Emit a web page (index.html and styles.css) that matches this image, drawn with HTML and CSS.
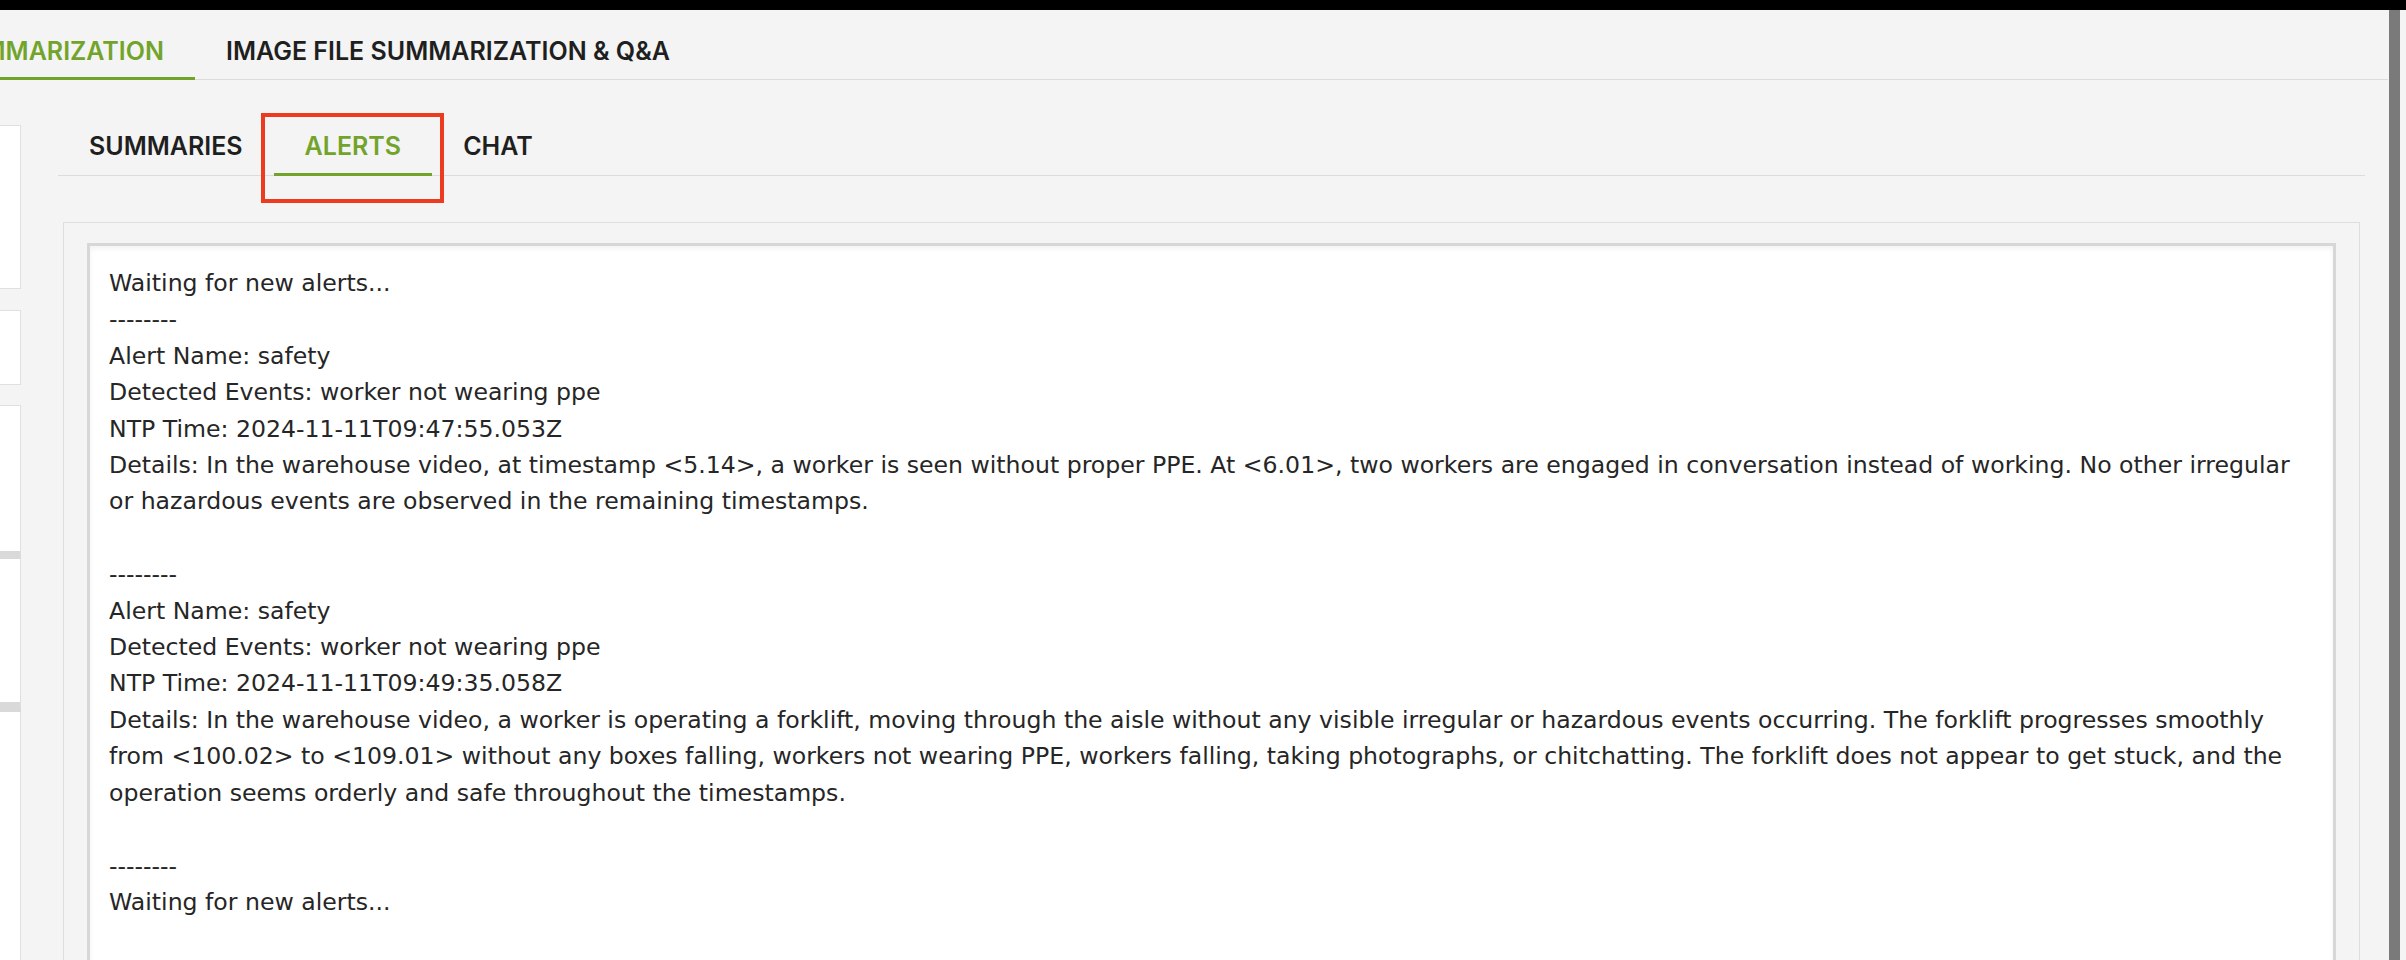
FILE: index.html
```html
<!DOCTYPE html>
<html lang="en">
<head>
    <meta charset="UTF-8">
    <meta name="viewport" content="width=device-width, initial-scale=1.0">
    <title>Video Search and Summarization - Alerts</title>
    <link rel="stylesheet" href="styles.css">
</head>
<body>
    <div class="window-bar"></div>

    <div class="app">
        <div class="page">
            <nav class="tabs top-tabs">
                <button class="tab tab-clipped active">VIDEO FILE SUMMARIZATION</button>
                <button class="tab">IMAGE FILE SUMMARIZATION &amp; Q&amp;A</button>
            </nav>

            <div class="workspace">
                <aside class="side">
                    <div class="side-block block-a"></div>
                    <div class="side-block block-b"></div>
                    <div class="side-block block-c"></div>
                    <div class="side-block block-d"></div>
                    <div class="side-block block-e"></div>
                </aside>

                <main class="results">
                    <nav class="tabs sub-tabs">
                        <button class="tab">SUMMARIES</button>
                        <button class="tab active">ALERTS<span class="callout"></span></button>
                        <button class="tab">CHAT</button>
                    </nav>

                    <div class="panel">
                        <div class="alerts-box">Waiting for new alerts...
--------
Alert Name: safety
Detected Events: worker not wearing ppe
NTP Time: 2024-11-11T09:47:55.053Z
Details: In the warehouse video, at timestamp &lt;5.14&gt;, a worker is seen without proper PPE. At &lt;6.01&gt;, two workers are engaged in conversation instead of working. No other irregular or hazardous events are observed in the remaining timestamps.

--------
Alert Name: safety
Detected Events: worker not wearing ppe
NTP Time: 2024-11-11T09:49:35.058Z
Details: In the warehouse video, a worker is operating a forklift, moving through the aisle without any visible irregular or hazardous events occurring. The forklift progresses smoothly from &lt;100.02&gt; to &lt;109.01&gt; without any boxes falling, workers not wearing PPE, workers falling, taking photographs, or chitchatting. The forklift does not appear to get stuck, and the operation seems orderly and safe throughout the timestamps.

--------
Waiting for new alerts...</div>
                    </div>
                </main>
            </div>
        </div>

        <div class="scrollbar"><div class="scrollbar-thumb"></div></div>
    </div>
</body>
</html>
```

FILE: styles.css
```css
* {
    margin: 0;
    padding: 0;
    box-sizing: border-box;
}

body {
    font-family: "DejaVu Sans", Verdana, sans-serif;
    background: #f4f4f4;
    color: #262626;
    height: 100vh;
    overflow: hidden;
}

.window-bar {
    height: 10px;
    background: #000;
}

.app {
    display: flex;
    height: 950px;
}

.page {
    flex: 1;
    min-width: 0;
}

/* tab bars */
.tabs {
    display: flex;
    border-bottom: 1px solid #dcdcdc;
}

.tab {
    position: relative;
    display: flex;
    font-family: Inter, "Liberation Sans", sans-serif;
    font-size: 25px;
    font-weight: 600;
    line-height: 30px;
    color: #1f1f1f;
    white-space: nowrap;
    background: none;
    border: none;
    border-bottom: 3px solid transparent;
    margin-bottom: -1px;
    padding: 26px 31px 11px;
    cursor: pointer;
}

.tab.active {
    color: #72a42c;
    border-bottom-color: #72a42c;
}

.tab-clipped {
    width: 195px;
    justify-content: flex-end;
    overflow: hidden;
}

.sub-tabs .tab {
    padding: 51px 31px 12px;
}

.callout {
    position: absolute;
    top: 33px;
    left: -13px;
    width: 183px;
    height: 90px;
    border: 4px solid #ec3b1e;
}

/* body */
.workspace {
    display: flex;
    align-items: flex-start;
    gap: 37px;
}

.side {
    width: 21px;
    margin-top: 45px;
    display: flex;
    flex-direction: column;
}

.side-block {
    background: #fff;
    border: 1px solid #e0e0e0;
    border-left: none;
}

.block-a { height: 164px; }
.block-b { height: 75px; margin-top: 21px; }
.block-c { height: 154px; margin-top: 20px; border-bottom: 8px solid #d9d9d9; }
.block-d { height: 153px; border-top: none; border-bottom: 10px solid #d9d9d9; }
.block-e { height: 260px; border-top: none; border-bottom: 10px solid #d9d9d9; }

.results {
    flex: 1;
    min-width: 0;
    margin-right: 23px;
}

.panel {
    margin: 46px 5px 0;
    height: 800px;
    border: 1px solid #dedede;
    padding: 20px 23px 0;
}

.alerts-box {
    height: 760px;
    background: #fff;
    border: 3px solid #d7d7d7;
    box-shadow: inset 0 3px 5px rgba(0, 0, 0, 0.05);
    padding: 19px 19px;
    font-size: 23.6px;
    line-height: 36.4px;
    white-space: pre-wrap;
}

/* fake browser scrollbar */
.scrollbar {
    width: 18px;
    padding: 0 6px 0 1px;
    background: #f4f4f4;
}

.scrollbar-thumb {
    height: 100%;
    background: #7a7a7a;
}
```
